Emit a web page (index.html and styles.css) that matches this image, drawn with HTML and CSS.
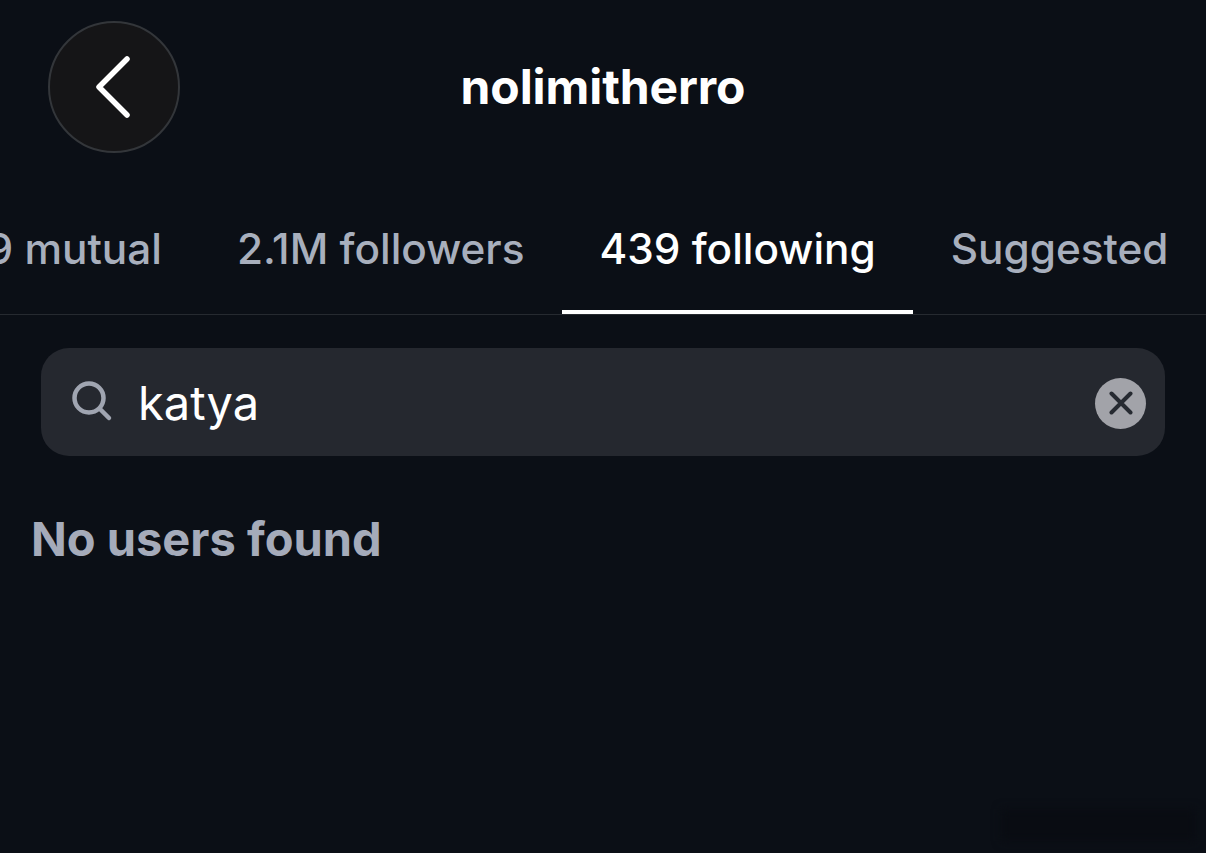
FILE: index.html
```html
<!DOCTYPE html>
<html lang="en">
<head>
    <meta charset="UTF-8">
    <meta name="viewport" content="width=device-width, initial-scale=1.0">
    <title>nolimitherro</title>
    <link rel="stylesheet" href="styles.css">
</head>
<body>
    <div class="header">
        <button class="back-button">
            <svg width="36" height="62" viewBox="0 0 36 62">
                <path d="M32 3 L4 31 L32 59" fill="none" stroke="#fff" stroke-width="5.5" stroke-linecap="round" stroke-linejoin="round"/>
            </svg>
        </button>
        <div class="title">nolimitherro</div>
    </div>

    <div class="tabs">
        <div class="tab">19 mutual</div>
        <div class="tab">2.1M followers</div>
        <div class="tab active">439 following</div>
        <div class="tab">Suggested</div>
    </div>

    <div class="search">
        <svg class="search-icon" width="42" height="42" viewBox="0 0 42 42">
            <circle cx="18" cy="18" r="14.5" fill="none" stroke="#a0a5b1" stroke-width="4.5"/>
            <path d="M29 29 L38 38" fill="none" stroke="#a0a5b1" stroke-width="4.5" stroke-linecap="round"/>
        </svg>
        <div class="search-text">katya</div>
        <div class="clear-button">
            <svg width="24" height="24" viewBox="0 0 24 24">
                <path d="M2.5 2.5 L21.5 21.5 M21.5 2.5 L2.5 21.5" fill="none" stroke="#262a31" stroke-width="4" stroke-linecap="round"/>
            </svg>
        </div>
    </div>

    <div class="empty">No users found</div>

    <div class="smudge"></div>
</body>
</html>
```
FILE: styles.css
```css
html, body {
    height: 100%;
}

body {
    margin: 0;
    background-color: #0b0f16;
    color: #fff;
    font-family: 'Inter', 'Liberation Sans', sans-serif;
    overflow: hidden;
}

.header {
    display: grid;
    grid-template-columns: 1fr auto 1fr;
    align-items: center;
    padding: 21px 48px 0;
}

.back-button {
    display: flex;
    justify-content: center;
    align-items: center;
    width: 132px;
    height: 132px;
    padding: 0 3px 0 0;
    background: #151517;
    border: 2px solid #33363a;
    border-radius: 50%;
    box-sizing: border-box;
}

.title {
    font-size: 48px;
    line-height: 58px;
    font-weight: 700;
    letter-spacing: -0.1px;
}

.tabs {
    display: flex;
    justify-content: flex-end;
    margin-top: 47px;
    overflow: hidden;
    border-bottom: 1px solid #262a30;
}

.tab {
    flex-shrink: 0;
    padding: 25px 37.5px 37px;
    margin-bottom: -1px;
    font-size: 42.3px;
    line-height: 48px;
    font-weight: 500;
    color: #a8afbd;
    white-space: nowrap;
    border-bottom: 5px solid transparent;
}

.tab.active {
    color: #fff;
    border-bottom-color: #fff;
}

.search {
    display: flex;
    align-items: center;
    height: 108px;
    margin: 33px 41px 0;
    padding: 0 19px 0 30px;
    background: #25282f;
    border-radius: 28px;
}

.search-icon {
    flex-shrink: 0;
    margin-bottom: 2px;
}

.search-text {
    flex: 1;
    margin-left: 25px;
    font-size: 47px;
}

.clear-button {
    display: flex;
    justify-content: center;
    align-items: center;
    width: 51px;
    height: 51px;
    margin-top: 2px;
    background: #a2a3a9;
    border-radius: 50%;
}

.empty {
    margin: 55px 0 0 31px;
    font-size: 47px;
    line-height: 56px;
    font-weight: 700;
    color: #a5abba;
}

/* faint patch in the bottom right corner of the screenshot */
.smudge {
    position: absolute;
    right: 10px;
    bottom: 12px;
    width: 195px;
    height: 32px;
    background: #090c12;
    filter: blur(5px);
}
```
